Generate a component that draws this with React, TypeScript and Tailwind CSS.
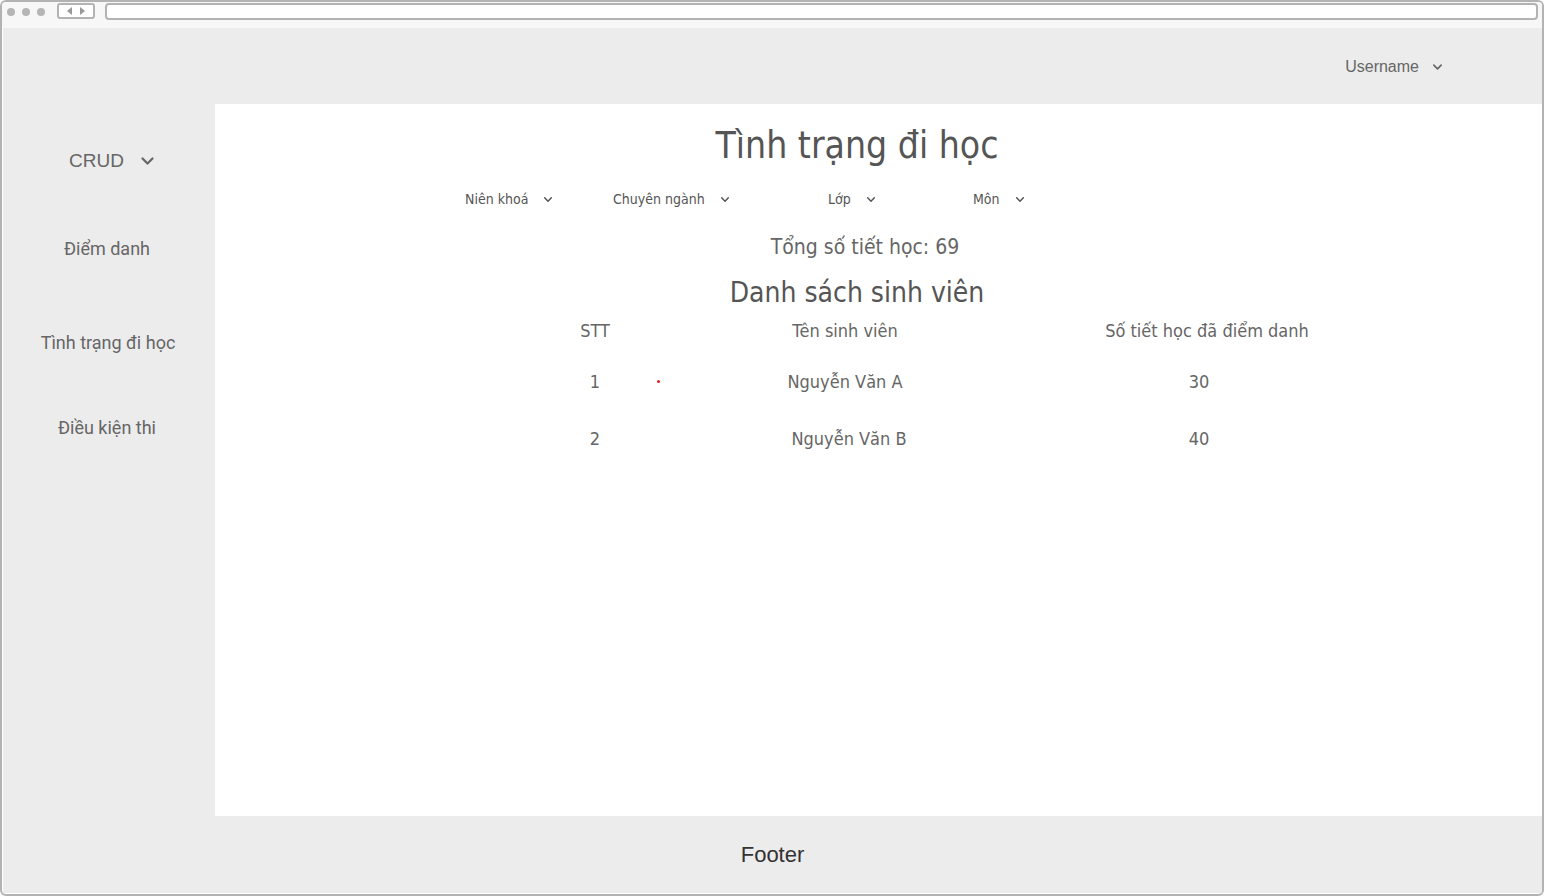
import React from "react";

const Chevron = ({ className = "" }: { className?: string }) => (
  <svg viewBox="0 0 12 8" fill="none" stroke="currentColor" strokeWidth="1.8" strokeLinecap="round" strokeLinejoin="round" className={className}>
    <path d="M2 2l4 4 4-4" />
  </svg>
);

const condensed = "font-['DejaVu_Sans_Condensed','Liberation_Sans_Narrow',Roboto,sans-serif]";

const rows = [
  { stt: "1", name: "Nguyễn Văn A", count: "30", shift: "", dot: true },
  { stt: "2", name: "Nguyễn Văn B", count: "40", shift: "pl-[8px]", dot: false },
];

export default function App() {
  return (
    <div className="w-[1544px] h-[896px] bg-white">
      <div className="h-full flex flex-col border-2 border-[#b3b3b3] rounded-[6px] overflow-hidden">
        {/* Browser chrome */}
        <div className="h-[26px] shrink-0 bg-[#f7f7f7] flex items-start pl-[5px] pr-[4px] pt-[1px]">
          <div className="flex gap-[7px] mt-[5px]">
            <span className="w-[8px] h-[8px] rounded-full bg-[#b5b5b5]" />
            <span className="w-[8px] h-[8px] rounded-full bg-[#b5b5b5]" />
            <span className="w-[8px] h-[8px] rounded-full bg-[#b5b5b5]" />
          </div>
          <div className="ml-[12px] w-[38px] h-[16px] border-2 border-[#b3b3b3] rounded-[3px] bg-white flex items-center justify-center gap-[8px] text-[#999]">
            <svg width="5" height="8" viewBox="0 0 5 8"><path d="M5 0v8L0 4z" fill="currentColor" /></svg>
            <svg width="5" height="8" viewBox="0 0 5 8"><path d="M0 0v8l5-4z" fill="currentColor" /></svg>
          </div>
          <div className="ml-[10px] flex-1 h-[17px] border-2 border-[#b3b3b3] rounded-[4px] bg-white" />
        </div>

        <div className="flex-1 flex flex-col bg-[#ececec] ml-[1px] mb-[1px]">
          {/* Header */}
          <div className="h-[76px] shrink-0 flex items-center justify-end pr-[99px] pt-[2px] font-['Liberation_Sans',Arial,sans-serif] text-[16px] text-[#666]">
            <span>Username</span>
            <Chevron className="w-[11px] h-[8px] ml-[13px]" />
          </div>

          <div className="flex-1 flex">
            {/* Sidebar */}
            <nav className="w-[212px] shrink-0 flex flex-col items-center pr-[4px] text-[#666]">
              <div className="mt-[43px] flex items-center font-['Liberation_Sans',Arial,sans-serif] text-[19px] pl-[10px]">
                <span>CRUD</span>
                <Chevron className="w-[15px] h-[10px] ml-[16px]" />
              </div>
              <div className="mt-[59px] font-['Roboto',sans-serif] text-[18px]">Điểm danh</div>
              <div className="mt-[67px] font-['Roboto',sans-serif] text-[18px] pl-[2px]">Tình trạng đi học</div>
              <div className="mt-[58px] font-['Roboto',sans-serif] text-[18px]">Điều kiện thi</div>
            </nav>

            {/* Main panel */}
            <main className={`flex-1 bg-white ${condensed} text-[#666]`}>
              <div className="w-[1284px] flex flex-col items-center">
                <h1 className="mt-[19px] text-[37px] leading-[46px] text-[#555]">Tình trạng đi học</h1>
                <div className="self-start ml-[250px] mt-[20px] flex items-center text-[14px] text-[#555]">
                  <div className="w-[148px] flex items-center">
                    <span>Niên khoá</span>
                    <Chevron className="w-[10px] h-[7px] ml-[15px]" />
                  </div>
                  <div className="w-[215px] flex items-center">
                    <span>Chuyên ngành</span>
                    <Chevron className="w-[10px] h-[7px] ml-[15px]" />
                  </div>
                  <div className="w-[145px] flex items-center">
                    <span>Lớp</span>
                    <Chevron className="w-[10px] h-[7px] ml-[15px]" />
                  </div>
                  <div className="flex items-center">
                    <span>Môn</span>
                    <Chevron className="w-[10px] h-[7px] ml-[15px]" />
                  </div>
                </div>
                <div className="mt-[22px] pl-[16px] text-[21px] leading-[30px]">Tổng số tiết học: 69</div>
                <h2 className="mt-[13px] text-[28px] leading-[36px] text-[#555]">Danh sách sinh viên</h2>

                <div className="self-start ml-[325px] mt-[2px] text-[18px]">
                  <div className="flex h-[34px] items-center">
                    <div className="w-[110px] text-center">STT</div>
                    <div className="w-[390px] text-center">Tên sinh viên</div>
                    <div className="w-[334px] text-center">Số tiết học đã điểm danh</div>
                  </div>
                  {rows.map((r, i) => (
                    <div key={r.stt} className={`relative flex h-[24px] items-center ${i === 0 ? "mt-[22px]" : "mt-[33px]"}`}>
                      <div className="w-[110px] text-center">{r.stt}</div>
                      <div className={`w-[390px] text-center ${r.shift}`}>{r.name}</div>
                      <div className="w-[334px] text-center pr-[16px]">{r.count}</div>
                      {r.dot && <span className="absolute left-[117px] top-[11px] w-[3px] h-[3px] rounded-full bg-[#e02020]" />}
                    </div>
                  ))}
                </div>
              </div>
            </main>
          </div>

          {/* Footer */}
          <footer className="h-[77px] shrink-0 flex items-center justify-center font-['Liberation_Sans',Arial,sans-serif] text-[22px] text-[#333]">
            Footer
          </footer>
        </div>
      </div>
    </div>
  );
}
